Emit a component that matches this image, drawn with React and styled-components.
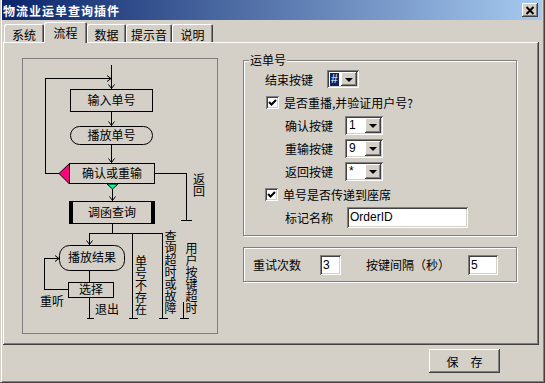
import React from "react";
import styled, { createGlobalStyle } from "styled-components";

const FACE = "#d4d0c8";
const SHADOW = "#808080";
const DARK = "#404040";

const GlobalStyle = createGlobalStyle`
  html, body { margin: 0; padding: 0; background: ${FACE}; }
  body {
    font-family: "Noto Sans CJK SC", "Liberation Sans", sans-serif;
    font-size: 12px;
    color: #000;
  }
`;

const raised = `
  box-shadow: inset -1px -1px ${DARK}, inset 1px 1px #fff,
    inset -2px -2px ${SHADOW}, inset 2px 2px ${FACE};
`;

const sunken = `
  box-shadow: inset 1px 1px ${SHADOW}, inset -1px -1px #fff,
    inset 2px 2px ${DARK}, inset -2px -2px ${FACE};
`;

const Window = styled.div`
  width: 545px;
  height: 383px;
  box-sizing: border-box;
  background: ${FACE};
  border-left: 1px solid ${FACE};
  border-right: 1px solid ${DARK};
  border-bottom: 1px solid ${DARK};
  box-shadow: inset 1px 0 #fff, inset -1px -1px ${SHADOW};
  display: flex;
  flex-direction: column;
  overflow: hidden;
`;

const TitleBar = styled.div`
  height: 20px;
  margin: 0 2px 0 1px;
  display: flex;
  align-items: center;
  justify-content: space-between;
  padding: 0 4px 0 1px;
  background: linear-gradient(to right, #0a246a, #a6caf0);
  color: #fff;
  font-weight: bold;
  font-size: 12px;
  letter-spacing: 1px;
`;

const CloseButton = styled.div`
  width: 16px;
  height: 14px;
  background: ${FACE};
  ${raised}
  display: flex;
  align-items: center;
  justify-content: center;
`;

const TabStrip = styled.div`
  position: relative;
  z-index: 1;
  height: 20px;
  margin-top: 2px;
  padding-left: 3px;
  display: flex;
  align-items: flex-end;
`;

const Tab = styled.div`
  width: ${(p) => p.$w}px;
  height: ${(p) => (p.$active ? 21 : 18)}px;
  margin-bottom: ${(p) => (p.$active ? -1 : 0)}px;
  box-sizing: border-box;
  background: ${FACE};
  border-radius: 2px 2px 0 0;
  box-shadow: inset 1px 1px #fff, inset -1px 0 ${DARK}, inset -2px 0 ${SHADOW};
  display: flex;
  align-items: center;
  justify-content: center;
  padding-top: ${(p) => (p.$active ? 0 : 2)}px;
`;

const Panel = styled.div`
  margin: 0 5px 0 2px;
  height: 303px;
  box-sizing: border-box;
  padding: 16px 0 0 19px;
  ${raised}
  display: flex;
  gap: 25px;
`;

const FlowBox = styled.div`
  width: 196px;
  height: 276px;
  box-sizing: border-box;
  border: 1px solid ${SHADOW};
  svg {
    display: block;
  }
  text {
    font-family: "Noto Sans CJK SC", sans-serif;
    font-size: 12px;
    fill: #000;
  }
`;

const RightColumn = styled.div`
  margin-top: 2px;
  display: flex;
  flex-direction: column;
  gap: 11px;
`;

const Group = styled.div`
  position: relative;
  width: 274px;
  height: ${(p) => p.$h}px;
  box-sizing: border-box;
  border: 1px solid ${SHADOW};
  box-shadow: inset 1px 1px #fff, 1px 1px #fff;
  display: flex;
  flex-direction: ${(p) => (p.$row ? "row" : "column")};
  align-items: ${(p) => (p.$row ? "center" : "stretch")};
  gap: 3px;
  padding-top: ${(p) => (p.$row ? 0 : 8)}px;
  padding-left: ${(p) => (p.$row ? 9 : 0)}px;
`;

const Legend = styled.span`
  position: absolute;
  top: -9px;
  left: 5px;
  padding: 0 1px;
  background: ${FACE};
  line-height: 16px;
`;

const Row = styled.div`
  height: 20px;
  display: flex;
  align-items: center;
  padding-left: ${(p) => p.$indent}px;
`;

const Label = styled.span`
  margin-right: ${(p) => p.$gap ?? 12}px;
  white-space: nowrap;
`;

const Combo = styled.div`
  width: ${(p) => p.$w}px;
  height: ${(p) => p.$h}px;
  box-sizing: border-box;
  background: #fff;
  ${sunken}
  padding: 2px;
  display: flex;
`;

const ComboText = styled.span`
  flex: 1;
  display: flex;
  align-items: center;
  padding-left: 1px;
  font-family: "Liberation Sans", sans-serif;
  font-size: 12px;
  span {
    padding: 0 1px;
    line-height: 13px;
    background: ${(p) => (p.$selected ? "#0a246a" : "transparent")};
    color: ${(p) => (p.$selected ? "#fff" : "#000")};
  }
`;

const ComboButton = styled.div`
  width: 16px;
  background: ${FACE};
  ${raised}
  display: flex;
  align-items: center;
  justify-content: center;
  &::after {
    content: "";
    border-left: 4px solid transparent;
    border-right: 4px solid transparent;
    border-top: 4px solid #000;
    margin-top: 1px;
  }
`;

const CheckBox = styled.div`
  width: 13px;
  height: 13px;
  box-sizing: border-box;
  background: #fff;
  ${sunken}
  margin-right: 5px;
  display: flex;
  align-items: center;
  justify-content: center;
`;

const TextBox = styled.div`
  width: ${(p) => p.$w}px;
  height: ${(p) => p.$h ?? 21}px;
  box-sizing: border-box;
  background: #fff;
  ${sunken}
  padding: 0 3px;
  display: flex;
  align-items: center;
  font-family: "Liberation Sans", sans-serif;
  font-size: 12px;
  margin-right: ${(p) => p.$gap ?? 0}px;
`;

const Footer = styled.div`
  display: flex;
  justify-content: flex-end;
  padding: 4px 44px 0 0;
`;

const Button = styled.div`
  width: 71px;
  height: 24px;
  box-sizing: border-box;
  ${raised}
  display: flex;
  align-items: center;
  justify-content: center;
`;

const Down = ({ x, y }) => (
  <polyline points={`${x - 3},${y - 4} ${x},${y} ${x + 3},${y - 4}`} fill="none" stroke="#000" />
);

const Right = ({ x, y }) => (
  <polyline points={`${x - 4},${y - 3} ${x},${y} ${x - 4},${y + 3}`} fill="none" stroke="#000" />
);

const VText = ({ x, top, text }) => (
  <text x={x} y={top} style={{ writingMode: "vertical-rl", textOrientation: "upright" }}>
    {text}
  </text>
);

const Stop = ({ x, y1, y2, w = 4 }) => (
  <g>
    <line x1={x} y1={y1} x2={x} y2={y2} />
    <line x1={x - w} y1={y2} x2={x + w + 1} y2={y2} />
  </g>
);

const FlowChart = () => (
  <FlowBox>
    <svg width="194" height="274" viewBox="23 59 194 274">
      <g stroke="#000" fill="none" shapeRendering="crispEdges">
        <line x1="111.5" y1="65" x2="111.5" y2="89" />
        <polyline points="59,173.5 45.5,173.5 45.5,78.5 111,78.5" />
        <rect x="70.5" y="89.5" width="82" height="22" />
        <line x1="111.5" y1="112" x2="111.5" y2="126" />
        <rect x="70.5" y="126.5" width="82" height="18" rx="9" shapeRendering="auto" />
        <line x1="111.5" y1="145" x2="111.5" y2="163" />
        <rect x="69.5" y="163.5" width="85" height="20" />
        <polyline points="155,173.5 186.5,173.5 186.5,220" />
        <line x1="181" y1="220.5" x2="192" y2="220.5" />
        <line x1="112.5" y1="189" x2="112.5" y2="201" />
        <rect x="69.5" y="201.5" width="85" height="22" />
        <line x1="112.5" y1="224" x2="112.5" y2="233.5" />
        <line x1="89" y1="233.5" x2="163" y2="233.5" />
        <line x1="89.5" y1="233" x2="89.5" y2="245" />
        <rect x="59.5" y="245.5" width="65" height="25" rx="10" shapeRendering="auto" />
        <line x1="89.5" y1="271" x2="89.5" y2="282" />
        <rect x="68.5" y="282.5" width="45" height="15" />
        <polyline points="68,289.5 44.5,289.5 44.5,258.5 59,258.5" />
        <Stop x={89.5} y1={298} y2={318.5} w={3} />
        <Stop x={132.5} y1={233} y2={318.5} />
        <Stop x={162.5} y1={233} y2={318.5} />
        <Stop x={183.5} y1={302} y2={318.5} />
      </g>
      <g shapeRendering="auto">
        <Down x={111.5} y={88.5} />
        <Right x={111} y={78.5} />
        <Down x={111.5} y={125.5} />
        <Down x={111.5} y={162.5} />
        <Down x={112.5} y={200.5} />
        <Down x={89.5} y={244.5} />
        <Right x={59} y={258.5} />
        <polygon points="59,173.5 69.5,163.5 69.5,184" fill="#ff0080" stroke="#000" />
        <polygon points="107,184 118,184 112.5,189" fill="#00ff99" stroke="#000" />
      </g>
      <rect x="69" y="201" width="4" height="23" fill="#000" />
      <rect x="151" y="201" width="4" height="23" fill="#000" />
      <text x="111.5" y="105" textAnchor="middle">输入单号</text>
      <text x="111.5" y="140" textAnchor="middle">播放单号</text>
      <text x="112" y="178" textAnchor="middle">确认或重输</text>
      <text x="112" y="217" textAnchor="middle">调函查询</text>
      <text x="92" y="262" textAnchor="middle">播放结果</text>
      <text x="91" y="294" textAnchor="middle">选择</text>
      <text x="40" y="306">重听</text>
      <text x="95" y="314">退出</text>
      <VText x={199} top={173} text="返回" />
      <VText x={141} top={255} text="单号不存在" />
      <VText x={170.5} top={230} text="查询超时或故障" />
      <VText x={191.5} top={242} text="用户按键超时" />
    </svg>
  </FlowBox>
);

const Check = () => (
  <CheckBox>
    <svg width="9" height="9" viewBox="0 0 9 9">
      <polyline points="1,4 3.5,6.5 8,2" fill="none" stroke="#000" strokeWidth="2" />
    </svg>
  </CheckBox>
);

const Select = ({ value, w, h = 19, selected }) => (
  <Combo $w={w} $h={h}>
    <ComboText $selected={selected}>
      <span>{value}</span>
    </ComboText>
    <ComboButton />
  </Combo>
);

const tabs = [
  ["系统", 40],
  ["流程", 43],
  ["数据", 39],
  ["提示音", 46],
  ["说明", 41],
];

export default function App() {
  return (
    <>
      <GlobalStyle />
      <Window>
        <TitleBar>
          <span>物流业运单查询插件</span>
          <CloseButton>
            <svg width="10" height="9" viewBox="0 0 10 9">
              <path d="M1.5 1 L8.5 8 M8.5 1 L1.5 8" stroke="#000" strokeWidth="2" />
            </svg>
          </CloseButton>
        </TitleBar>
        <TabStrip>
          {tabs.map(([name, w]) => (
            <Tab key={name} $w={w} $active={name === "流程"}>
              {name}
            </Tab>
          ))}
        </TabStrip>
        <Panel>
          <FlowChart />
          <RightColumn>
            <Group $h={176}>
              <Legend>运单号</Legend>
              <Row $indent={21}>
                <Label $gap={14}>结束按键</Label>
                <Select value="#" w={32} h={18} selected />
              </Row>
              <Row $indent={22}>
                <Check />
                <span>是否重播,并验证用户号?</span>
              </Row>
              <Row $indent={41}>
                <Label>确认按键</Label>
                <Select value="1" w={38} />
              </Row>
              <Row $indent={41}>
                <Label>重输按键</Label>
                <Select value="9" w={38} />
              </Row>
              <Row $indent={41}>
                <Label>返回按键</Label>
                <Select value="*" w={38} />
              </Row>
              <Row $indent={21}>
                <Check />
                <span>单号是否传递到座席</span>
              </Row>
              <Row $indent={41}>
                <Label $gap={14}>标记名称</Label>
                <TextBox $w={121}>OrderID</TextBox>
              </Row>
            </Group>
            <Group $h={35} $row>
              <Label $gap={16}>重试次数</Label>
              <TextBox $w={21} $h={20} $gap={22}>3</TextBox>
              <Label $gap={15}>按键间隔（秒）</Label>
              <TextBox $w={30} $h={20}>5</TextBox>
            </Group>
          </RightColumn>
        </Panel>
        <Footer>
          <Button>保　存</Button>
        </Footer>
      </Window>
    </>
  );
}
